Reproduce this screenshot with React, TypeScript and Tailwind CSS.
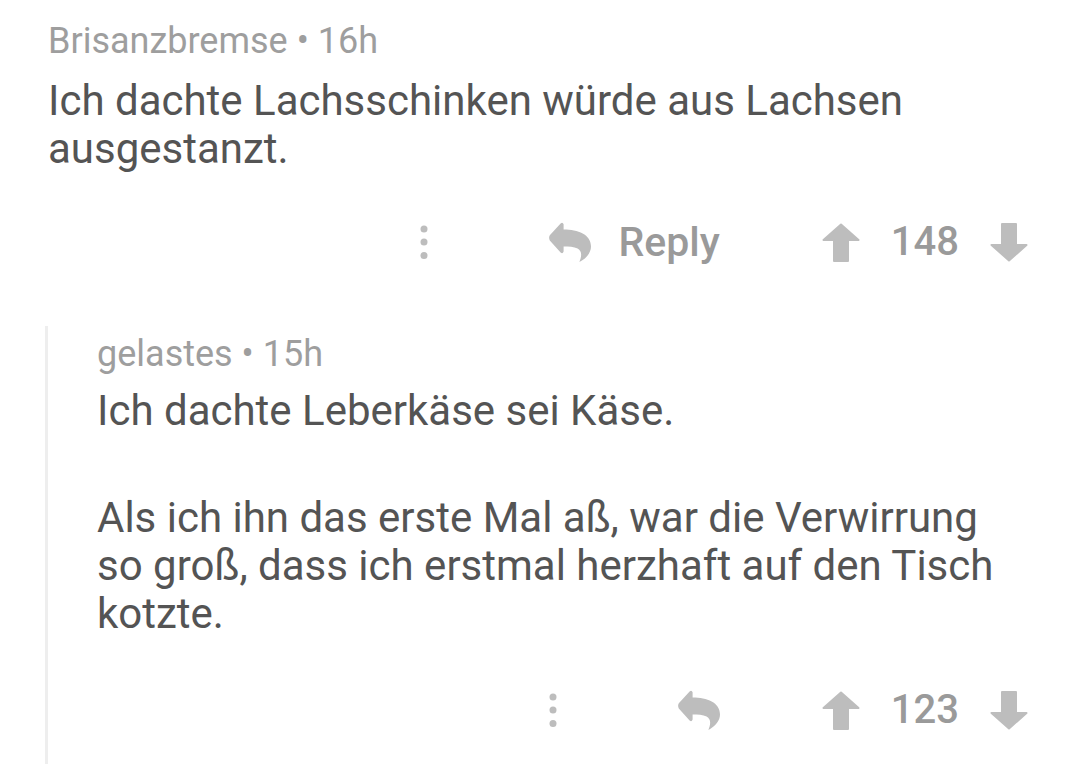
import React from 'react';

type Comment = {
  author: string;
  age: string;
  paragraphs: string[][];
  score: number;
  replyLabel: boolean;
};

const top: Comment = {
  author: 'Brisanzbremse',
  age: '16h',
  paragraphs: [['Ich dachte Lachsschinken würde aus Lachsen', 'ausgestanzt.']],
  score: 148,
  replyLabel: true,
};

const child: Comment = {
  author: 'gelastes',
  age: '15h',
  paragraphs: [
    ['Ich dachte Leberkäse sei Käse.'],
    [
      'Als ich ihn das erste Mal aß, war die Verwirrung',
      'so groß, dass ich erstmal herzhaft auf den Tisch',
      'kotzte.',
    ],
  ],
  score: 123,
  replyLabel: false,
};

function DotsIcon() {
  return (
    <svg width="8" height="34" viewBox="0 0 8 34" className="fill-[#bdbdbd]">
      <circle cx="4" cy="4" r="3.5" />
      <circle cx="4" cy="17" r="3.5" />
      <circle cx="4" cy="30.5" r="3.5" />
    </svg>
  );
}

function ReplyIcon() {
  return (
    <svg width="42" height="40" viewBox="0 0 42 40" className="fill-[#bdbdbd]">
      <path d="M0.8 13.2 L11.6 1.4 Q13.6 -0.4 14.6 2.2 L14.6 7.6 C29 7.6 42 12.6 42 24.6 C42 30.6 37.6 36.4 30.4 40 C32.6 34.4 33.4 29.4 28.6 26.6 C25 24.6 19.6 24.4 14.6 24.4 L14.6 29.6 Q13.6 32.2 11.6 30.4 L0.8 18.6 Q-0.6 15.8 0.8 13.2 Z" />
    </svg>
  );
}

function VoteArrow({ down }: { down?: boolean }) {
  return (
    <svg
      width="38"
      height="39"
      viewBox="0 0 38 39"
      className={`fill-[#bdbdbd] stroke-[#bdbdbd] ${down ? 'rotate-180' : ''}`}
    >
      <path
        strokeWidth="2"
        strokeLinejoin="round"
        d="M19 1.5 L36.5 17 L26 17 L26 38 L12 38 L12 17 L1.5 17 Z"
      />
    </svg>
  );
}

function Actions({ c }: { c: Comment }) {
  return (
    <div className="flex h-[48px] items-center justify-end pr-[52px]">
      <div className="mr-[121px] flex items-center">
        <DotsIcon />
      </div>
      <div className="mr-[102px] flex items-center">
        <ReplyIcon />
        {c.replyLabel && (
          <span className="ml-[27px] text-[41px] font-medium leading-[48px] text-[#9a9a9a]">Reply</span>
        )}
      </div>
      <div className="flex items-center gap-[31px]">
        <VoteArrow />
        <span className="text-[40px] font-medium leading-[48px] text-[#9a9a9a]">{c.score}</span>
        <VoteArrow down />
      </div>
    </div>
  );
}

function Body({ c }: { c: Comment }) {
  return (
    <div className="text-[42px] leading-[48px] text-[#545454]">
      {c.paragraphs.map((lines, i) => (
        <p key={i} className={i > 0 ? 'mt-[59px]' : ''}>
          {lines.map((l, j) => (
            <span key={j} className="block">
              {l}
            </span>
          ))}
        </p>
      ))}
    </div>
  );
}

function Meta({ c }: { c: Comment }) {
  return (
    <div className="text-[36px] leading-[44px] text-[#9e9e9e]">
      {c.author} • {c.age}
    </div>
  );
}

export default function App() {
  return (
    <div className="h-[764px] w-[1080px] overflow-hidden bg-white font-['Roboto',sans-serif]">
      <div className="pl-12 pt-[19px]">
        <Meta c={top} />
        <div className="mt-[14px]">
          <Body c={top} />
        </div>
      </div>
      <div className="mt-[45px]">
        <Actions c={top} />
      </div>

      <div className="ml-[45px] mt-[60px] h-[440px] border-l-[3px] border-[#eeeeee] pl-[49px] pt-[6px]">
        <Meta c={child} />
        <div className="mt-[11px]">
          <Body c={child} />
        </div>
        <div className="mt-[48px]">
          <Actions c={child} />
        </div>
      </div>
    </div>
  );
}
